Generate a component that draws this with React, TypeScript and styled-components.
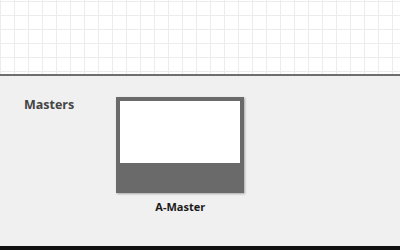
import { FC } from "react";
import styled, { createGlobalStyle } from "styled-components";

const GlobalStyle = createGlobalStyle`
  html, body {
    margin: 0;
    padding: 0;
    width: 400px;
    height: 250px;
    overflow: hidden;
    font-family: "Open Sans", "DejaVu Sans", sans-serif;
  }
`;

const App: FC = () => {
  return (
    <>
      <GlobalStyle />
      <Page>
        <Canvas />
        <Panel>
          <SectionTitle>Masters</SectionTitle>
          <MasterList>
            <MasterItem>
              <Thumb>
                <ThumbContent />
              </Thumb>
              <MasterName>A-Master</MasterName>
            </MasterItem>
          </MasterList>
        </Panel>
        <BottomBar />
      </Page>
    </>
  );
};

const Page = styled.div`
  display: flex;
  flex-direction: column;
  width: 400px;
  height: 250px;
  background: #f0f0f0;
`;

const Canvas = styled.div`
  height: 74px;
  flex-shrink: 0;
  background-color: #ffffff;
  background-image: linear-gradient(to right, #ececec 1px, transparent 1px),
    linear-gradient(to bottom, #ececec 1px, transparent 1px);
  background-size: 14px 14px;
  background-position: 0px 1px;
  border-bottom: 2px solid #6e6e6e;
`;

const Panel = styled.div`
  flex: 1;
  display: flex;
  align-items: flex-start;
  padding: 20px 0 0 24px;
  gap: 42px;
`;

const SectionTitle = styled.div`
  font-family: "Open Sans", sans-serif;
  font-weight: 700;
  font-size: 12.5px;
  color: #444444;
  line-height: 16px;
  margin-top: 1px;
`;

const MasterList = styled.div`
  display: flex;
  gap: 16px;
`;

const MasterItem = styled.div`
  display: flex;
  flex-direction: column;
  align-items: center;
  gap: 7px;
  padding-top: 1px;
`;

const Thumb = styled.div`
  width: 120px;
  height: 92px;
  background: #6a6a6a;
  padding: 4px 4px 0 4px;
  box-shadow: 1px 1px 2px rgba(0, 0, 0, 0.3);
`;

const ThumbContent = styled.div`
  height: 62px;
  background: #ffffff;
`;

const MasterName = styled.div`
  font-family: "Open Sans", sans-serif;
  font-weight: 700;
  font-size: 11px;
  color: #1a1a1a;
  line-height: 14px;
`;

const BottomBar = styled.div`
  height: 4px;
  flex-shrink: 0;
  background: #111111;
`;

export default App;
